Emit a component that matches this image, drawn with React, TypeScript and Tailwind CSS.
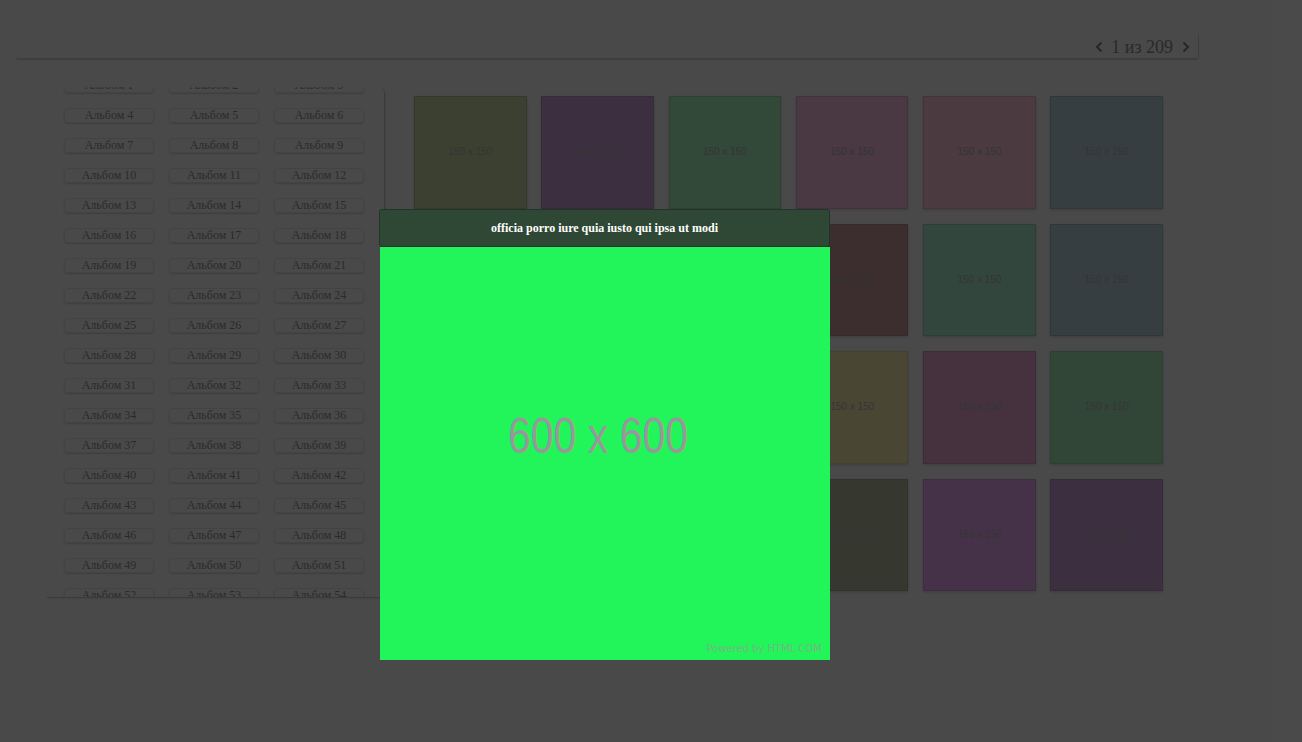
import React from "react";

const thumbColors: string[] = [
  "#c8d5a0", "#c8a0d5", "#a7f0bb", "#f7bbdc", "#fac1d8", "#b4cfdc",
  "#d5c8a0", "#a0c8d5", "#d5a0b4", "#c89999", "#a7e9cf", "#b4cfdc",
  "#a0d5c8", "#c8c8a0", "#bba7e9", "#f5efab", "#e9a7cf", "#a7e9bb",
  "#a7bbe9", "#e9cfa7", "#cfa7e9", "#b4bba0", "#e9a7f0", "#c8a0d5",
];

function Chevron({ dir }: { dir: "left" | "right" }) {
  return (
    <svg width="8" height="12" viewBox="0 0 8 12" className="block">
      {dir === "left" ? (
        <polyline points="6.5,1.5 2,6 6.5,10.5" fill="none" stroke="#808080" strokeWidth="2" />
      ) : (
        <polyline points="1.5,1.5 6,6 1.5,10.5" fill="none" stroke="#808080" strokeWidth="2" />
      )}
    </svg>
  );
}

export default function App() {
  const albums = Array.from({ length: 54 }, (_, i) => i + 1);
  return (
    <div className="relative w-[1302px] h-[742px] overflow-hidden bg-[#f6f6f6] font-['Liberation_Serif',serif]">
      {/* top pager bar */}
      <div className="mt-[35px] ml-[15px] w-[1184px] h-[24px] border-b border-r border-[#cccccc] rounded-bl-[4px] rounded-br-[2px] shadow-[0_2px_2px_-1px_rgba(0,0,0,0.18)] flex items-center justify-end pr-[8px]">
        <Chevron dir="left" />
        <span className="ml-[8px] mr-[9px] text-[18px] leading-none text-[#8c8c8c]">1 из 209</span>
        <Chevron dir="right" />
      </div>

      {/* body */}
      <div className="flex mt-[28px] ml-[47px] items-start">
        {/* albums panel */}
        <div className="w-[338px] h-[511px] overflow-hidden border-r border-b border-[#c4c4c4] rounded-tr-[6px] shadow-[1px_1px_2px_rgba(0,0,0,0.08)]">
          <div className="mt-[-9px] pl-[17px] grid grid-cols-[repeat(3,90px)] gap-x-[15px] gap-y-[15px]">
            {albums.map((n) => (
              <div
                key={n}
                className="h-[15px] rounded-[4px] border border-[#e2e2e2] shadow-[0_1px_2px_rgba(0,0,0,0.18)] text-center text-[12px] leading-[13px] text-[#8e8e8e]"
              >
                Альбом {n}
              </div>
            ))}
          </div>
        </div>

        {/* thumbnails */}
        <div className="ml-[29px] mt-[9px] grid grid-cols-[repeat(6,112.5px)] gap-x-[14.8px] gap-y-[15px]">
          {thumbColors.map((c, i) => (
            <div
              key={i}
              className="h-[112.5px] border border-black/10 shadow-[0_1px_3px_rgba(0,0,0,0.18)] flex items-center justify-center"
              style={{ backgroundColor: c }}
            >
              <span className="font-['Liberation_Sans',Arial,sans-serif] text-[10px] leading-none text-[#b0b0b0]">
                150 x 150
              </span>
            </div>
          ))}
        </div>
      </div>

      {/* overlay */}
      <div className="absolute inset-0 bg-black/70" />

      {/* modal */}
      <div className="absolute left-[379px] top-[209px] w-[451px]">
        <div className="h-[38px] bg-[#2f4835] border border-[#22332a] rounded-[3px] flex items-center justify-center">
          <span className="text-white font-bold text-[12px] leading-none">
            officia porro iure quia iusto qui ipsa ut modi
          </span>
        </div>
        <div className="relative ml-[1px] w-[450px] h-[413px] bg-[#22f55a] flex items-center justify-center overflow-hidden">
          <span className="font-['Liberation_Sans',Arial,sans-serif] text-[41px] leading-none text-[#9a979a] scale-y-[1.22] -translate-x-[7px] -translate-y-[17px]">
            600 x 600
          </span>
          <span className="absolute right-[8px] bottom-[6px] font-['DejaVu_Sans',sans-serif] text-[10px] leading-none text-[#74b584]">
            Powered by HTML.COM
          </span>
        </div>
      </div>
    </div>
  );
}
